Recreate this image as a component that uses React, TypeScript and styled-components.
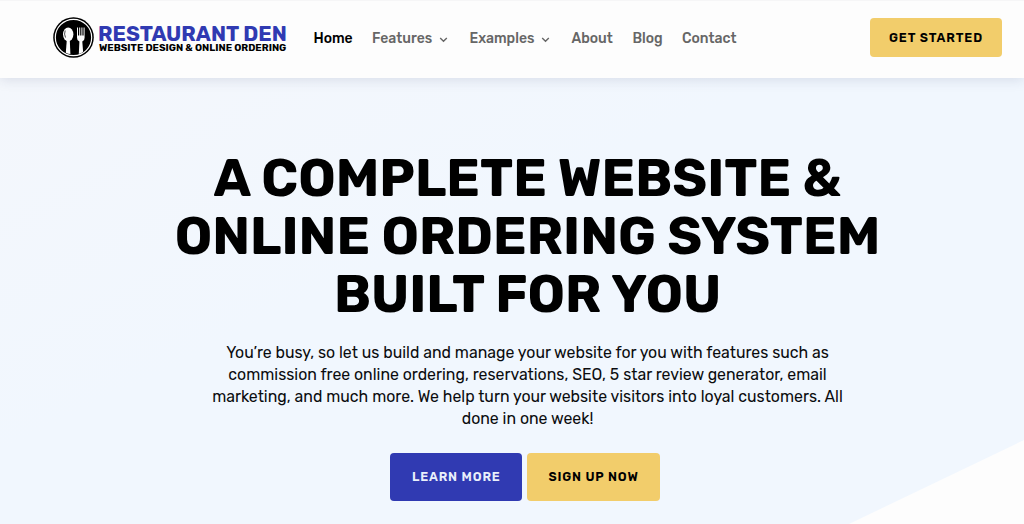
import styled, { createGlobalStyle } from "styled-components";

const GlobalStyle = createGlobalStyle`
  * {
    box-sizing: border-box;
  }

  body {
    margin: 0;
    background-color: #fdfdfd;
    font-family: Rubik, Roboto, sans-serif;
    overflow: hidden;
  }
`;

const Page = styled.div`
  display: flex;
  flex-direction: column;
  height: 524px;
`;

const Header = styled.header`
  position: relative;
  z-index: 1;
  display: flex;
  align-items: center;
  height: 78px;
  padding: 0 22px 4px 53px;
  background-color: #fdfdfd;
  border-top: 1px solid #f6f6f7;
  box-shadow: 0 2px 12px rgba(40, 50, 90, 0.13);
`;

const Logo = styled.a`
  display: flex;
  align-items: center;
  gap: 4px;
  width: 260.5px;
`;

const LogoText = styled.div`
  display: flex;
  flex-direction: column;
  padding-top: 3px;
  white-space: nowrap;
`;

const LogoName = styled.span`
  color: #303ab2;
  font-size: 21px;
  font-weight: 700;
  line-height: 18px;
`;

const LogoTagline = styled.span`
  padding-left: 1px;
  color: #000;
  font-size: 10px;
  font-weight: 700;
  line-height: 11px;
`;

const Nav = styled.nav`
  display: flex;
  flex: 1;
  gap: 20px;
  padding-top: 2px;
`;

const NavLink = styled.a<{ $width: number; $active?: boolean }>`
  display: flex;
  align-items: center;
  justify-content: space-between;
  width: ${({ $width }) => $width}px;
  color: ${({ $active }) => ($active ? "#000" : "#666")};
  font-size: 14px;
  font-weight: 500;
  line-height: 20px;
  white-space: nowrap;
`;

const Caret = styled.svg`
  margin: 2px 1.5px 0 auto;
  fill: none;
  stroke: #666;
  stroke-width: 1.4;
`;

const Button = styled.button<{ $width: number; $primary?: boolean; $small?: boolean }>`
  width: ${({ $width }) => $width}px;
  height: ${({ $small }) => ($small ? 39 : 47.5)}px;
  padding: 0;
  border: none;
  border-radius: 4px;
  background-color: ${({ $primary }) => ($primary ? "#303ab2" : "#f2cd6b")};
  color: ${({ $primary }) => ($primary ? "#e9effb" : "#000")};
  font-family: inherit;
  font-size: 12.6px;
  font-weight: 600;
  letter-spacing: ${({ $small }) => ($small ? 0.9 : 0.85)}px;
  text-transform: uppercase;
  white-space: nowrap;
  cursor: pointer;
`;

const Hero = styled.main`
  display: flex;
  flex: 1;
  flex-direction: column;
  align-items: center;
  padding: 71px 0 0 31px;
  background: linear-gradient(154.4deg, #f4f7fc 0%, #f1f7fe 40%);
  clip-path: polygon(0 0, 100% 0, 100% 362px, 849px 100%, 0 100%);
`;

const Title = styled.h1`
  width: 730px;
  margin: 0;
  color: #000;
  font-size: 52.7px;
  font-weight: 700;
  line-height: 58px;
  text-align: center;
  text-transform: uppercase;
`;

const Description = styled.p`
  width: 650px;
  margin: 18.6px 0 22.8px;
  color: #0b0c0e;
  font-size: 15.85px;
  line-height: 22.2px;
  text-align: center;
`;

const Actions = styled.div`
  display: flex;
  gap: 4.5px;
  margin-right: 4.5px;
`;

const links = [
  { label: "Home", width: 38.5, active: true },
  { label: "Features", width: 77.5, menu: true },
  { label: "Examples", width: 82, menu: true },
  { label: "About", width: 41 },
  { label: "Blog", width: 29.5 },
  { label: "Contact", width: 56 },
];

function LogoMark() {
  return (
    <svg width="41" height="41" viewBox="0 0 41 41">
      <circle cx="20.5" cy="20.5" r="20.3" fill="#000" />
      <circle cx="20.5" cy="20.5" r="18.2" fill="none" stroke="#fff" strokeWidth="1.2" />
      <g fill="#fdfdfd">
        <ellipse cx="15.2" cy="17.3" rx="5.2" ry="6.9" />
        <path d="M13.8 23h3l.6 14q-2.4 0-4.6-1.3z" />
        <path d="M24 10.5h1v8h1.2v-8h1v8h1.2v-8h1v8h1.2v-8h1v10.2q0 3.2-2.3 3.9l.8 10.2q-1.9 1.9-4.3 2.3l.6-12.5q-2.4-.7-2.4-3.9z" />
      </g>
      <path d="M12.2 13.5q-1.4 3.6.3 7" fill="none" stroke="#000" strokeWidth=".7" />
    </svg>
  );
}

export default function App() {
  return (
    <Page>
      <GlobalStyle />
      <Header>
        <Logo>
          <LogoMark />
          <LogoText>
            <LogoName>RESTAURANT DEN</LogoName>
            <LogoTagline>WEBSITE DESIGN &amp; ONLINE ORDERING</LogoTagline>
          </LogoText>
        </Logo>
        <Nav>
          {links.map(({ label, width, active, menu }) => (
            <NavLink key={label} $width={width} $active={active}>
              {label}
              {menu ? (
                <Caret width="9" height="6" viewBox="0 0 9 6">
                  <path d="M1.2 1l3.3 3.3L7.8 1" />
                </Caret>
              ) : null}
            </NavLink>
          ))}
        </Nav>
        <Button $width={132} $small>
          Get Started
        </Button>
      </Header>
      <Hero>
        <Title>A complete website &amp; online ordering system built for you</Title>
        <Description>
          You’re busy, so let us build and manage your website for you with features such as
          commission free online ordering, reservations, SEO, 5 star review generator, email
          marketing, and much more. We help turn your website visitors into loyal customers. All
          done in one week!
        </Description>
        <Actions>
          <Button $width={132} $primary>
            Learn More
          </Button>
          <Button $width={133.5}>Sign Up Now</Button>
        </Actions>
      </Hero>
    </Page>
  );
}
